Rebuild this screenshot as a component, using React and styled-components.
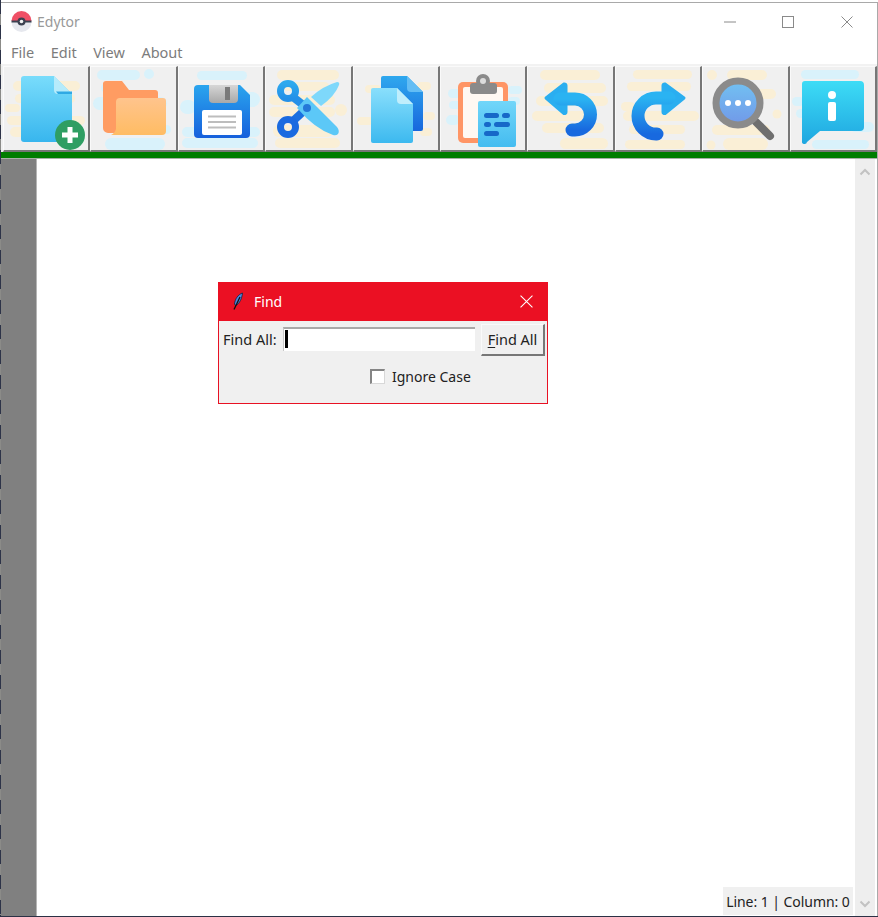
import React from 'react';
import styled, { createGlobalStyle } from 'styled-components';

const UI_FONT = '"Noto Sans", "Open Sans", sans-serif';
const YELLOW = '#faefd6';
const BLUE = '#d9f2fb';

const GlobalStyle = createGlobalStyle`
    html, body {
        margin: 0;
        padding: 0;
        background: #fff;
    }
`;

const Page = styled.div`
    width: 878px;
    height: 917px;
    padding: 2px 0 2px 1px;
    box-sizing: border-box;
    display: flex;
    overflow: hidden;
    position: relative;
    background: linear-gradient(#2b3145, #2b3145) left bottom / 100% 2px no-repeat,
        repeating-linear-gradient(#2d3348 0 14px, #8b8b88 14px 25px) left top / 1px 100% no-repeat,
        #fff;
`;

const Win = styled.div`
    width: 876px;
    height: 913px;
    border-top: 1px solid #a9a9a9;
    border-right: 1px solid #a9a9a9;
    background: #fff;
    display: flex;
    flex-direction: column;
    font-family: ${UI_FONT};
`;

const TitleBar = styled.div`
    height: 37px;
    display: flex;
    align-items: center;
    padding-left: 10px;
    flex: none;
`;

const AppTitle = styled.span`
    margin-left: 5px;
    font-size: 14px;
    color: #999;
`;

const WinButtons = styled.div`
    margin-left: auto;
    margin-right: 1px;
    display: flex;
`;

const WinButton = styled.div`
    width: 58.5px;
    height: 37px;
    display: flex;
    align-items: center;
    justify-content: center;
`;

const MenuBar = styled.div`
    height: 26px;
    flex: none;
    display: flex;
    align-items: center;
    gap: 16.5px;
    padding-left: 10px;
    box-sizing: border-box;
    font-size: 14.5px;
    color: #7c7c7c;
    border-bottom: 2px solid #f2f2f2;
`;

const Toolbar = styled.div`
    height: 86px;
    flex: none;
    padding-left: 2px;
    display: grid;
    grid-template-columns: repeat(10, 1fr);
    background: #f0f0f0;
`;

const ToolButton = styled.button`
    padding: 0;
    margin: 0;
    background: #f0f0f0;
    border-style: solid;
    border-width: 1px 2px 2px 1px;
    border-color: #fafafa #777 #777 #fafafa;
    overflow: hidden;
    display: flex;
    align-items: center;
    justify-content: center;
    svg {
        display: block;
        flex: none;
    }
`;

const GreenBar = styled.div`
    height: 6px;
    flex: none;
    background: #007d00;
    border-bottom: 1px solid #a8b0a8;
`;

const Body = styled.div`
    flex: 1;
    display: flex;
    min-height: 0;
`;

const Gutter = styled.div`
    width: 35px;
    flex: none;
    background: #808080;
    border-right: 1px solid #b5b5b5;
`;

const TextArea = styled.div`
    flex: 1;
    background: #fff;
`;

const Scrollbar = styled.div`
    width: 20px;
    margin-right: 2px;
    flex: none;
    background: #eeeeee;
    display: flex;
    flex-direction: column;
    justify-content: space-between;
    align-items: center;
    padding: 9px 0 8px;
    box-sizing: border-box;
`;

const StatusLabel = styled.div`
    position: absolute;
    left: 723px;
    top: 887px;
    width: 130px;
    height: 28px;
    background: #f0f0f0;
    color: #222;
    font-size: 14px;
    letter-spacing: -0.05px;
    display: flex;
    align-items: center;
    justify-content: center;
    white-space: nowrap;
`;

const Dialog = styled.div`
    position: absolute;
    left: 218px;
    top: 282px;
    width: 330px;
    height: 122px;
    box-sizing: border-box;
    border: 1px solid #e81123;
    border-top: none;
    background: #f0f0f0;
    display: flex;
    flex-direction: column;
`;

const DialogTitle = styled.div`
    height: 39px;
    margin: 0 -1px;
    flex: none;
    background: #eb1023;
    color: #fff;
    font-size: 14px;
    display: flex;
    align-items: center;
    padding: 0 15px 0 14px;
`;

const DialogName = styled.span`
    margin-left: 10px;
`;

const DialogClose = styled.div`
    margin-left: auto;
    display: flex;
`;

const FindRow = styled.div`
    display: flex;
    align-items: flex-start;
    padding: 3px 0 0 4px;
    height: 36px;
    box-sizing: border-box;
    flex: none;
    font-size: 14.5px;
    color: #222;
`;

const FindLabel = styled.span`
    line-height: 30px;
    width: 60px;
    white-space: nowrap;
`;

const FindInput = styled.div`
    width: 192px;
    height: 24px;
    margin-top: 3px;
    box-sizing: border-box;
    background: #fff;
    border-top: 2px solid #a9a9a9;
    border-left: 1px solid #c8c8c8;
    padding: 1px 0 0 1px;
`;

const Caret = styled.div`
    width: 3px;
    height: 18px;
    background: #000;
`;

const FindButton = styled.button`
    margin-left: 6px;
    width: 64px;
    height: 32px;
    padding: 0 0 2px;
    background: #f0f0f0;
    font: inherit;
    color: #222;
    border-style: solid;
    border-width: 1px 2px 2px 1px;
    border-color: #fafafa #777 #777 #fafafa;
    u {
        text-underline-offset: 2px;
    }
`;

const OptionRow = styled.div`
    display: flex;
    align-items: center;
    padding: 10px 0 0 151px;
    font-size: 14px;
    color: #222;
`;

const CheckBox = styled.div`
    width: 15px;
    height: 15px;
    box-sizing: border-box;
    background: #fff;
    border-style: solid;
    border-width: 2px 1px 1px 2px;
    border-color: #858585 #d8d8d8 #d8d8d8 #858585;
    margin-right: 7px;
`;

// background pills behind each toolbar icon: [x, y, w, h]
const Blobs = ({ color, items }) => (
    <g fill={color}>
        {items.map(([x, y, w, h], i) => (
            <rect key={i} x={x} y={y} width={w} height={h} rx={h / 2} />
        ))}
    </g>
);

const Icon = ({ children }) => (
    <svg width="86" height="84" viewBox="0 0 86 84">{children}</svg>
);

const Grad = ({ id, from, to }) => (
    <linearGradient id={id} x1="0" y1="0" x2="0" y2="1">
        <stop offset="0" stopColor={from} />
        <stop offset="1" stopColor={to} />
    </linearGradient>
);

const NewIcon = () => (
    <Icon>
        <Blobs color={YELLOW} items={[[10, 14, 67, 10], [12, 27, 60, 9], [2, 37, 15, 8], [4, 49, 78, 9], [7, 60, 70, 10]]} />
        <defs><Grad id="newFile" from="#79dcfb" to="#38b6ee" /></defs>
        <path d="M21 9h30l18 18v45a3 3 0 0 1-3 3H21a3 3 0 0 1-3-3V12a3 3 0 0 1 3-3z" fill="url(#newFile)" />
        <path d="M51 9l18 18H55a4 4 0 0 1-4-4z" fill="#b6ebfb" />
        <path d="M53 24.500h16V27H55z" fill="#2fa9e4" />
        <circle cx="67" cy="68" r="15" fill="#2f9e63" />
        <path d="M64.500 60h5v5.500H75v5h-5.500V76h-5v-5.500H59v-5h5.500z" fill="#fff" />
    </Icon>
);

const OpenIcon = () => (
    <Icon>
        <Blobs color={BLUE} items={[[6, 3, 43, 10], [2, 30, 74, 13], [10, 17, 20, 8], [54, 58, 26, 9], [14, 71, 60, 12]]} />
        <circle cx="58" cy="7" r="5" fill={BLUE} />
        <defs><Grad id="openFront" from="#ffc48d" to="#ffbc63" /></defs>
        <path d="M15 14h16l7 9h26a3 3 0 0 1 3 3v40H17a5 5 0 0 1-5-5V17a3 3 0 0 1 3-3z" fill="#ff9c62" />
        <path d="M29 31h43a3 3 0 0 1 3 3v30a4 4 0 0 1-4 4H20a9 9 0 0 0 5-6V35a4 4 0 0 1 4-4z" fill="url(#openFront)" />
    </Icon>
);

const SaveIcon = () => (
    <Icon>
        <Blobs color={BLUE} items={[[19, 4, 50, 9], [55, 25, 27, 15], [2, 33, 16, 14], [4, 60, 78, 10], [4, 71, 76, 10]]} />
        <defs>
            <Grad id="saveBody" from="#2aa5ee" to="#1660dc" />
            <Grad id="saveShutter" from="#d6d6d6" to="#a8a8a8" />
        </defs>
        <path d="M20 18h42l10 10v39a4 4 0 0 1-4 4H20a4 4 0 0 1-4-4V22a4 4 0 0 1 4-4z" fill="url(#saveBody)" />
        <path d="M31 18h29v14a4 4 0 0 1-4 4H35a4 4 0 0 1-4-4z" fill="url(#saveShutter)" />
        <rect x="47" y="20" width="5" height="13" fill="#7a7a7a" />
        <rect x="24" y="43" width="40" height="25" rx="2" fill="#fff" />
        <path d="M30 49.500h28M30 55h28M30 60.500h28" stroke="#bdbdbd" strokeWidth="2" />
    </Icon>
);

const CutIcon = () => (
    <Icon>
        <Blobs color={YELLOW} items={[[12, 3, 62, 10], [18, 15, 46, 9], [4, 28, 66, 10], [4, 40, 66, 10], [8, 58, 60, 12], [10, 71, 65, 10]]} />
        <circle cx="76" cy="43" r="6" fill={YELLOW} />
        <defs><Grad id="cutRing" from="#2ea9ee" to="#2390e8" /></defs>
        <path d="M42 41L28 54" stroke="#1a6fe0" strokeWidth="8" />
        <path d="M42 41L28 30" stroke="#2590e8" strokeWidth="8" />
        <circle cx="23" cy="24" r="7.500" fill="none" stroke="url(#cutRing)" strokeWidth="7" />
        <circle cx="23" cy="60" r="7.500" fill="none" stroke="#1a6ae0" strokeWidth="7" />
        <path d="M46 30Q58 19 72 15q3 0 2 3Q70 29 56 39z" fill="#7ed8fb" />
        <path d="M42 30L72 60q3 4 1 7-2 2-5 1Q50 62 32 41z" fill="#5cc8f7" />
        <circle cx="42" cy="41" r="4" fill="#2478d8" />
    </Icon>
);

const CopyIcon = () => (
    <Icon>
        <Blobs color={YELLOW} items={[[12, 18, 16, 8], [64, 15, 14, 8], [4, 50, 16, 8], [70, 45, 12, 8], [67, 61, 12, 8]]} />
        <defs>
            <Grad id="copyBack" from="#2fa8ee" to="#1767dd" />
            <Grad id="copyFront" from="#8adffc" to="#3cb9ef" />
        </defs>
        <path d="M30 9h24l16 16v37a2 2 0 0 1-2 2H30a2 2 0 0 1-2-2V11a2 2 0 0 1 2-2z" fill="url(#copyBack)" />
        <path d="M54 9l16 16H58a4 4 0 0 1-4-4z" fill="#63bdf4" />
        <path d="M20 21h24l16 16v37a2 2 0 0 1-2 2H20a2 2 0 0 1-2-2V23a2 2 0 0 1 2-2z" fill="url(#copyFront)" />
        <path d="M44 21l16 16H48a4 4 0 0 1-4-4z" fill="#c0eefc" />
    </Icon>
);

const PasteIcon = () => (
    <Icon>
        <Blobs color={BLUE} items={[[8, 22, 15, 9], [68, 19, 14, 8], [9, 34, 15, 8], [6, 48, 14, 10], [68, 30, 12, 8]]} />
        <defs><Grad id="pasteNote" from="#72d6f9" to="#44bcf0" /></defs>
        <rect x="18" y="15" width="50" height="61" rx="5" fill="#ff9565" />
        <rect x="23" y="20" width="40" height="51" rx="2" fill="#fff8f2" />
        <rect x="30" y="16" width="27" height="11" rx="3" fill="#8a8a8a" />
        <circle cx="43" cy="14" r="7" fill="#8a8a8a" />
        <circle cx="43" cy="14" r="3" fill="#dcdcdc" />
        <rect x="38" y="34" width="38" height="46" rx="2" fill="url(#pasteNote)" />
        <g fill="#1768c8">
            <rect x="44" y="46" width="15" height="5" rx="2.500" />
            <rect x="62" y="46" width="8" height="5" rx="2.500" />
            <rect x="44" y="55" width="7" height="5" rx="2.500" />
            <rect x="54" y="55" width="16" height="5" rx="2.500" />
            <rect x="44" y="64" width="15" height="5" rx="2.500" />
        </g>
    </Icon>
);

const UndoIcon = () => (
    <Icon>
        <Blobs color={YELLOW} items={[[12, 3, 60, 10], [16, 16, 62, 10], [8, 29, 72, 10], [4, 44, 60, 10], [14, 56, 62, 10], [32, 71, 48, 11]]} />
        <defs><Grad id="undoArrow" from="#2ab3f2" to="#1869df" /></defs>
        <path d="M18 31L36 17a1.500 1.500 0 0 1 2 1.500V45a1.500 1.500 0 0 1-2 1.500z" fill="#2aaef0" stroke="#2aaef0" strokeWidth="3" strokeLinejoin="round" />
        <path d="M32 32h15a15.500 15.500 0 0 1 0 31h-3" fill="none" stroke="url(#undoArrow)" strokeWidth="13" strokeLinecap="round" />
    </Icon>
);

const RedoIcon = () => (
    <Icon>
        <Blobs color={YELLOW} items={[[18, 3, 59, 9], [12, 15, 64, 9], [6, 35, 14, 9], [8, 44, 76, 10], [14, 58, 56, 9], [10, 73, 60, 9]]} />
        <defs><Grad id="redoArrow" from="#2ab3f2" to="#1869df" /></defs>
        <path d="M69 31L50 17a1.500 1.500 0 0 0-2 1.500V45a1.500 1.500 0 0 0 2 1.500z" fill="#2aaef0" stroke="#2aaef0" strokeWidth="3" strokeLinejoin="round" />
        <path d="M54 31H41a18 18 0 0 0 0 36h1" fill="none" stroke="url(#redoArrow)" strokeWidth="13" strokeLinecap="round" />
    </Icon>
);

const FindIcon = () => (
    <Icon>
        <Blobs color={YELLOW} items={[[25, 3, 40, 10], [50, 22, 24, 10], [10, 58, 58, 10], [21, 71, 45, 12]]} />
        <circle cx="10" cy="8" r="5" fill={YELLOW} />
        <circle cx="75" cy="47" r="4.500" fill={YELLOW} />
        <circle cx="9" cy="78" r="4.500" fill={YELLOW} />
        <defs><Grad id="findGlass" from="#72c2f2" to="#7198e8" /></defs>
        <path d="M54 55l14 14" stroke="#6f6f6f" strokeWidth="8" strokeLinecap="round" />
        <circle cx="36" cy="36" r="22" fill="url(#findGlass)" stroke="#8b8b8b" strokeWidth="7" />
        <circle cx="26" cy="36" r="3" fill="#fff" />
        <circle cx="36" cy="36" r="3" fill="#fff" />
        <circle cx="46" cy="36" r="3" fill="#fff" />
    </Icon>
);

const InfoIcon = () => (
    <Icon>
        <Blobs color={BLUE} items={[[11, 3, 58, 9], [6, 42, 12, 9], [2, 30, 12, 9], [22, 73, 57, 9], [60, 55, 24, 10]]} />
        <defs><Grad id="infoBubble" from="#3ddcf6" to="#1fa6e0" /></defs>
        <path d="M15 14h55a4 4 0 0 1 4 4v42a4 4 0 0 1-4 4H30L17 75a2.500 2.500 0 0 1-5-1V17a3 3 0 0 1 3-3z" fill="url(#infoBubble)" />
        <circle cx="42" cy="28" r="4" fill="#fff" />
        <rect x="38" y="35" width="8" height="19" rx="2" fill="#fff" />
    </Icon>
);

const Pokeball = () => (
    <svg width="21" height="21" viewBox="0 0 21 21">
        <path d="M.5 10a10 10 0 0 1 20 0z" fill="#ef5066" />
        <path d="M.5 11a10 10 0 0 0 20 0z" fill="#e6e8ee" />
        <rect x=".5" y="9.500" width="20" height="2" fill="#3b4150" />
        <circle cx="10.500" cy="10.500" r="4" fill="#3b4150" />
        <circle cx="10.500" cy="10.500" r="1.800" fill="#f4f4f4" />
    </svg>
);

const Feather = () => (
    <svg width="12" height="20" viewBox="0 0 12 20">
        <path d="M10.500 1C6 2.500 3 7 2.500 12l1 1.500C7.500 12 10 6.500 10.500 1z" fill="#4f86e0" stroke="#12233f" strokeWidth=".8" />
        <path d="M8 5L2 17.500" stroke="#111" strokeWidth="1.300" />
    </svg>
);

const Chevron = ({ up }) => (
    <svg width="12" height="8" viewBox="0 0 12 8">
        <path d={up ? 'M1.500 6.500L6 2l4.500 4.500' : 'M1.500 1.500L6 6l4.500-4.500'} fill="none" stroke="#c2c2c2" strokeWidth="2" />
    </svg>
);

const CloseGlyph = ({ color, size }) => (
    <svg width={size} height={size} viewBox="0 0 12 12">
        <path d="M.5.500l11 11M11.500.500l-11 11" stroke={color} strokeWidth="1" />
    </svg>
);

const TOOLS = [NewIcon, OpenIcon, SaveIcon, CutIcon, CopyIcon, PasteIcon, UndoIcon, RedoIcon, FindIcon, InfoIcon];

const App = () => (
    <Page>
        <GlobalStyle />
        <Win>
            <TitleBar>
                <Pokeball />
                <AppTitle>Edytor</AppTitle>
                <WinButtons>
                    <WinButton>
                        <svg width="12" height="2" viewBox="0 0 12 2"><path d="M0 1h12" stroke="#8a8a8a" /></svg>
                    </WinButton>
                    <WinButton>
                        <svg width="12" height="12" viewBox="0 0 12 12"><rect x=".5" y=".5" width="11" height="11" fill="none" stroke="#8a8a8a" /></svg>
                    </WinButton>
                    <WinButton>
                        <CloseGlyph color="#8a8a8a" size={12} />
                    </WinButton>
                </WinButtons>
            </TitleBar>
            <MenuBar>
                <span>File</span>
                <span>Edit</span>
                <span>View</span>
                <span>About</span>
            </MenuBar>
            <Toolbar>
                {TOOLS.map((Tool, i) => (
                    <ToolButton key={i}><Tool /></ToolButton>
                ))}
            </Toolbar>
            <GreenBar />
            <Body>
                <Gutter />
                <TextArea />
                <Scrollbar>
                    <Chevron up />
                    <Chevron />
                </Scrollbar>
            </Body>
            <StatusLabel>Line: 1 | Column: 0</StatusLabel>
            <Dialog>
                <DialogTitle>
                    <Feather />
                    <DialogName>Find</DialogName>
                    <DialogClose><CloseGlyph color="#fff" size={13} /></DialogClose>
                </DialogTitle>
                <FindRow>
                    <FindLabel>Find All:</FindLabel>
                    <FindInput><Caret /></FindInput>
                    <FindButton><u>F</u>ind All</FindButton>
                </FindRow>
                <OptionRow>
                    <CheckBox />
                    Ignore Case
                </OptionRow>
            </Dialog>
        </Win>
    </Page>
);

export default App;
